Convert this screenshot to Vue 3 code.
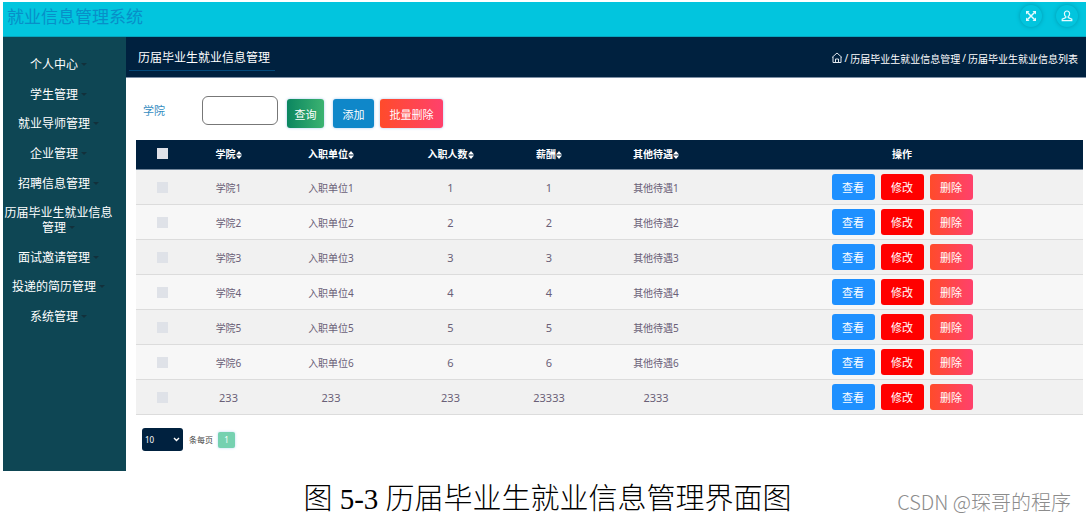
<script setup>
import { ref } from 'vue'

const menu = [
  '个人中心',
  '学生管理',
  '就业导师管理',
  '企业管理',
  '招聘信息管理',
  '历届毕业生就业信息管理',
  '面试邀请管理',
  '投递的简历管理',
  '系统管理',
]
const columns = ['学院', '入职单位', '入职人数', '薪酬', '其他待遇']
const rows = [
  ...[1, 2, 3, 4, 5, 6].map((n) => [`学院${n}`, `入职单位${n}`, `${n}`, `${n}`, `其他待遇${n}`]),
  ['233', '233', '233', '23333', '2333'],
]
const isNumber = (text) => /^\d+$/.test(text)
const college = ref('')
const pageSize = ref('10')
</script>

<template>
  <div class="page">
    <div class="app">
      <header class="topbar">
        <h1>就业信息管理系统</h1>
        <div class="tools">
          <button class="round" type="button" aria-label="全屏">
            <svg width="12" height="12" viewBox="0 0 12 12">
              <path d="M2.5 2.5L9.5 9.5M9.5 2.5L2.5 9.5" stroke="#e6fbff" stroke-width="1.5" />
              <path d="M1 1h3.6L1 4.6zM11 1v3.6L7.4 1zM1 11V7.4L4.6 11zM11 11H7.4L11 7.4z" fill="#e6fbff" />
            </svg>
          </button>
          <button class="round" type="button" aria-label="用户">
            <svg width="12" height="12" viewBox="0 0 12 12" fill="none" stroke="#e6fbff" stroke-width="1.2">
              <path d="M6 1C4.300 1 3.400 2.200 3.400 3.700C3.400 5 4 6 4.800 6.600V7.600L1.200 9.200V10.700H10.800V9.200L7.200 7.600V6.600C8 6 8.600 5 8.600 3.700C8.600 2.200 7.700 1 6 1z" />
            </svg>
          </button>
        </div>
      </header>

      <div class="body">
        <nav class="sidebar">
          <ul>
            <li v-for="item in menu" :key="item">
              <a href="#">{{ item }}<i class="caret"></i></a>
            </li>
          </ul>
        </nav>

        <main>
          <div class="subbar">
            <h2>历届毕业生就业信息管理</h2>
            <div class="crumbs">
              <a href="#" aria-label="首页">
                <svg width="12" height="12" viewBox="0 0 12 12" fill="none" stroke="#dfe6ee">
                  <path d="M1 5.500L6 1L11 5.500M2 5V10.500H10V5M4.500 10.500V7H7.500V10.500" />
                </svg>
              </a>
              <span>/</span><a href="#">历届毕业生就业信息管理</a><span>/</span><span>历届毕业生就业信息列表</span>
            </div>
          </div>

          <section class="content">
            <form class="filters" @submit.prevent>
              <label for="college">学院</label>
              <input id="college" v-model="college" type="text" />
              <button class="btn search" type="submit">查询</button>
              <button class="btn add" type="button">添加</button>
              <button class="btn danger" type="button">批量删除</button>
            </form>

            <table>
              <colgroup>
                <col class="c-check" /><col class="c-college" /><col class="c-unit" /><col class="c-count" />
                <col class="c-pay" /><col class="c-other" /><col />
              </colgroup>
              <thead>
                <tr>
                  <th><input type="checkbox" aria-label="全选" /></th>
                  <th v-for="c in columns" :key="c">
                    {{ c }}<svg class="sort" width="6" height="8" viewBox="0 0 6 8" fill="#fff"><path d="M3 0L6 3.400H0zM3 8L0 4.600H6z" /></svg>
                  </th>
                  <th>操作</th>
                </tr>
              </thead>
              <tbody>
                <tr v-for="(row, i) in rows" :key="i">
                  <td><input type="checkbox" :aria-label="'选择' + row[0]" /></td>
                  <td v-for="(cell, j) in row" :key="j" :class="{ num: isNumber(cell) }">{{ cell }}</td>
                  <td>
                    <div class="actions">
                      <button class="act view" type="button">查看</button>
                      <button class="act edit" type="button">修改</button>
                      <button class="act danger" type="button">删除</button>
                    </div>
                  </td>
                </tr>
              </tbody>
            </table>

            <div class="pager">
              <div class="select">
                <select id="size" v-model="pageSize">
                  <option>10</option>
                  <option>20</option>
                  <option>50</option>
                </select>
                <svg width="7" height="5" viewBox="0 0 7 5" fill="none" stroke="#fff" stroke-width="1.4"><path d="M1 1L3.500 3.500L6 1" /></svg>
              </div>
              <label for="size">条每页</label>
              <button class="current" type="button">1</button>
            </div>
          </section>
        </main>
      </div>
    </div>

    <footer>
      <p class="caption">图 5-3 历届毕业生就业信息管理界面图</p>
      <span class="watermark">CSDN @琛哥的程序</span>
    </footer>
  </div>
</template>

<style>
body {
  margin: 0;
  background: #fff;
}
</style>

<style scoped>
.page {
  font-family: "Noto Sans", "Noto Sans CJK SC", sans-serif;
  font-size: 12px;
  padding: 2px 0 0 3px;
}
h1, h2, p, ul {
  margin: 0;
  padding: 0;
  font-weight: 400;
}
a {
  color: inherit;
  text-decoration: none;
}
button, input, select {
  font-family: inherit;
  margin: 0;
  padding: 0;
  border: 0;
  box-sizing: border-box;
}
.topbar {
  display: flex;
  align-items: center;
  justify-content: space-between;
  height: 35px;
  box-sizing: border-box;
  padding: 0 8px 6px 4px;
  background: #02c5de;
  border-bottom: 1px solid #06a5be;
}
h1 {
  padding-top: 2px;
  font-size: 17px;
  line-height: 24px;
  color: #088fc8;
}
.tools {
  display: flex;
  gap: 14px;
}
.round {
  display: flex;
  align-items: center;
  justify-content: center;
  width: 22px;
  height: 22px;
  border-radius: 50%;
  background: #02c5de;
  box-shadow: 0 0 4px #0299b0;
}
.body {
  display: flex;
}
.sidebar {
  flex: none;
  width: 123px;
  box-sizing: border-box;
  padding: 20px 12px 0 0;
  background: #0e4654;
}
.sidebar ul {
  display: flex;
  flex-direction: column;
  justify-content: space-between;
  min-height: 267px;
  list-style: none;
}
.sidebar li {
  text-align: center;
  line-height: 15px;
  color: #fff;
}
.caret {
  display: inline-block;
  margin-left: 3px;
  vertical-align: 3px;
  border: 3px solid transparent;
  border-top-color: #12303b;
  border-bottom: 0;
}
main {
  flex: 1;
  min-width: 0;
}
.subbar {
  display: flex;
  align-items: flex-start;
  justify-content: space-between;
  height: 41px;
  box-sizing: border-box;
  padding: 9px 8px 0 3px;
  background: #00213f;
  border-bottom: 1px solid #7d8fa5;
  color: #fff;
}
h2 {
  font-size: 12px;
  line-height: 24px;
  padding: 0 5px 0 9px;
  border-bottom: 1px solid #03497a;
}
.crumbs {
  display: flex;
  align-items: center;
  gap: 2px;
  height: 24px;
  font-size: 10px;
}
.crumbs svg {
  display: block;
}
.content {
  padding: 18px 3px 20px 10px;
}
.filters {
  display: flex;
  align-items: flex-end;
  margin-bottom: 12px;
  height: 32px;
}
.filters label {
  align-self: flex-start;
  width: 59px;
  padding-left: 7px;
  font-size: 11px;
  line-height: 30px;
  color: #368dc1;
}
.filters input {
  align-self: flex-start;
  width: 76px;
  height: 29px;
  padding: 0 6px;
  border: 1px solid #777;
  border-radius: 6px;
}
.btn {
  height: 29px;
  border-radius: 3px;
  color: #fff;
  font-size: 11px;
  box-shadow: 0 0 3px #a9c8ee;
}
.search {
  width: 37px;
  margin: 0 9px;
  background: linear-gradient(90deg, #0b8660, #3cb371);
}
.add {
  width: 41px;
  margin-right: 6px;
  background: #0f87c9;
}
.danger {
  background: linear-gradient(90deg, #ff4b2b, #ff416c);
}
.btn.danger {
  width: 63px;
}
table {
  width: 100%;
  table-layout: fixed;
  border-collapse: collapse;
  text-align: center;
  font-size: 10px;
}
.c-check { width: 53px; }
.c-college { width: 79px; }
.c-unit { width: 126px; }
.c-count { width: 113px; }
.c-pay { width: 84px; }
.c-other { width: 130px; }
th, td {
  padding: 0;
}
th {
  height: 27px;
  padding-bottom: 2px;
  background: #00213f;
  border-bottom: 1px solid #72869b;
  color: #fff;
  font-weight: 700;
}
td {
  height: 34px;
  border-bottom: 1px solid #dcdcdc;
  color: #6a6077;
}
tbody tr:nth-child(odd) {
  background: #f1f1f1;
}
tbody tr:nth-child(even) {
  background: #f7f7f7;
}
.num {
  font-size: 11px;
}
.sort {
  vertical-align: -1px;
}
table input {
  appearance: none;
  display: block;
  width: 11px;
  height: 11px;
  margin: 0 auto;
  background: #dfe2e8;
}
.actions {
  display: flex;
  justify-content: center;
  gap: 6px;
}
.act {
  width: 43px;
  height: 26px;
  border-radius: 3px;
  color: #fff;
  font-size: 11px;
}
.view {
  background: #1e90ff;
}
.edit {
  background: #f00;
}
.pager {
  display: flex;
  align-items: center;
  margin-top: 13px;
  padding-left: 6px;
  font-size: 8px;
  color: #444;
}
.select {
  position: relative;
  margin-right: 6px;
}
.select select {
  appearance: none;
  display: block;
  width: 41px;
  height: 23px;
  padding-left: 3px;
  border-radius: 3px;
  background: #00213f;
  color: #fff;
  font-size: 8px;
}
.select svg {
  position: absolute;
  right: 3px;
  top: 9px;
  pointer-events: none;
}
.current {
  width: 17px;
  height: 16px;
  margin-left: 5px;
  border-radius: 2px;
  background: #75d1b0;
  box-shadow: 0 0 3px #b9d9f2;
  color: #fff;
  font-size: 8px;
}
footer {
  position: relative;
  padding-top: 8px;
}
.caption {
  padding-left: 6px;
  text-align: center;
  font-family: "Liberation Serif", "Noto Sans CJK SC", serif;
  font-size: 29px;
  font-weight: 300;
  line-height: 40px;
  color: #000;
}
.watermark {
  position: absolute;
  right: 15px;
  top: 19px;
  font-family: "Noto Sans CJK SC", sans-serif;
  font-size: 20px;
  font-weight: 300;
  line-height: 24px;
  color: #8c8c8c;
}
</style>
